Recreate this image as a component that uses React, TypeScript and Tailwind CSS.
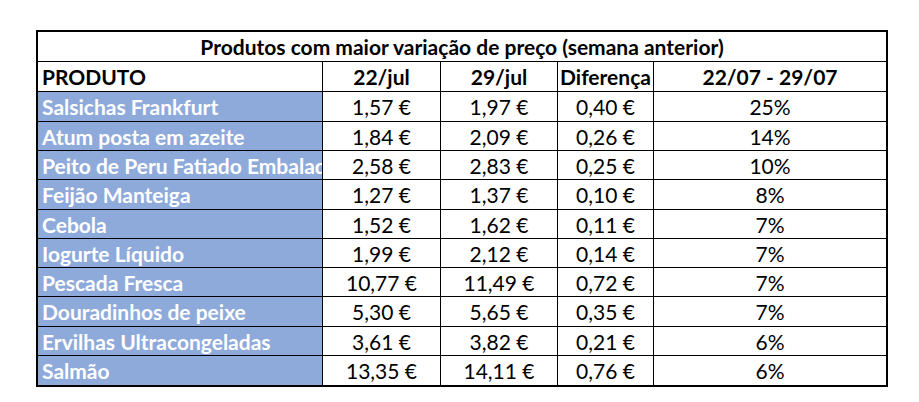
import React from 'react';

const rows = [
  { name: 'Salsichas Frankfurt', a: '1,57 €', b: '1,97 €', d: '0,40 €', p: '25%', h: 'h-[30px]' },
  { name: 'Atum posta em azeite', a: '1,84 €', b: '2,09 €', d: '0,26 €', p: '14%', h: 'h-[29px]' },
  { name: 'Peito de Peru Fatiado Embalado', a: '2,58 €', b: '2,83 €', d: '0,25 €', p: '10%', h: 'h-[29px]' },
  { name: 'Feijão Manteiga', a: '1,27 €', b: '1,37 €', d: '0,10 €', p: '8%', h: 'h-[30px]' },
  { name: 'Cebola', a: '1,52 €', b: '1,62 €', d: '0,11 €', p: '7%', h: 'h-[29px]' },
  { name: 'Iogurte Líquido', a: '1,99 €', b: '2,12 €', d: '0,14 €', p: '7%', h: 'h-[29px]' },
  { name: 'Pescada Fresca', a: '10,77 €', b: '11,49 €', d: '0,72 €', p: '7%', h: 'h-[29px]' },
  { name: 'Douradinhos de peixe', a: '5,30 €', b: '5,65 €', d: '0,35 €', p: '7%', h: 'h-[30px]' },
  { name: 'Ervilhas Ultracongeladas', a: '3,61 €', b: '3,82 €', d: '0,21 €', p: '6%', h: 'h-[29px]' },
  { name: 'Salmão', a: '13,35 €', b: '14,11 €', d: '0,76 €', p: '6%', h: 'h-[29px]' },
];

const cols = 'grid grid-cols-[285px_118px_117px_96px_232px]';
const cell = 'flex items-center justify-center border-r border-black whitespace-nowrap overflow-hidden';

export default function App() {
  return (
    <div className="w-[919px] h-[402px] bg-white pl-[36px] pt-[30px] text-black text-[21px] leading-none font-['Lato',sans-serif]">
      <div className="w-[852px] border-2 border-black">
        {/* title */}
        <div className="h-[30px] flex items-center justify-center border-b border-black font-bold">
          Produtos com maior variação de preço (semana anterior)
        </div>

        {/* header */}
        <div className={`${cols} h-[30px] border-b border-black font-bold`}>
          <div className="flex items-center pl-[4px] border-r border-black">PRODUTO</div>
          <div className={cell}>22/jul</div>
          <div className={cell}>29/jul</div>
          <div className={cell}>Diferença</div>
          <div className="flex items-center justify-center">22/07 - 29/07</div>
        </div>

        {/* rows */}
        {rows.map((r, i) => (
          <div
            key={r.name}
            className={`${cols} ${r.h} ${i < rows.length - 1 ? 'border-b border-black' : ''}`}
          >
            <div className="flex items-center pl-[4px] bg-[#8eaadb] text-white font-bold border-r border-black whitespace-nowrap overflow-hidden">
              {r.name}
            </div>
            <div className={cell}>{r.a}</div>
            <div className={cell}>{r.b}</div>
            <div className={cell}>{r.d}</div>
            <div className="flex items-center justify-center">{r.p}</div>
          </div>
        ))}
      </div>
    </div>
  );
}
